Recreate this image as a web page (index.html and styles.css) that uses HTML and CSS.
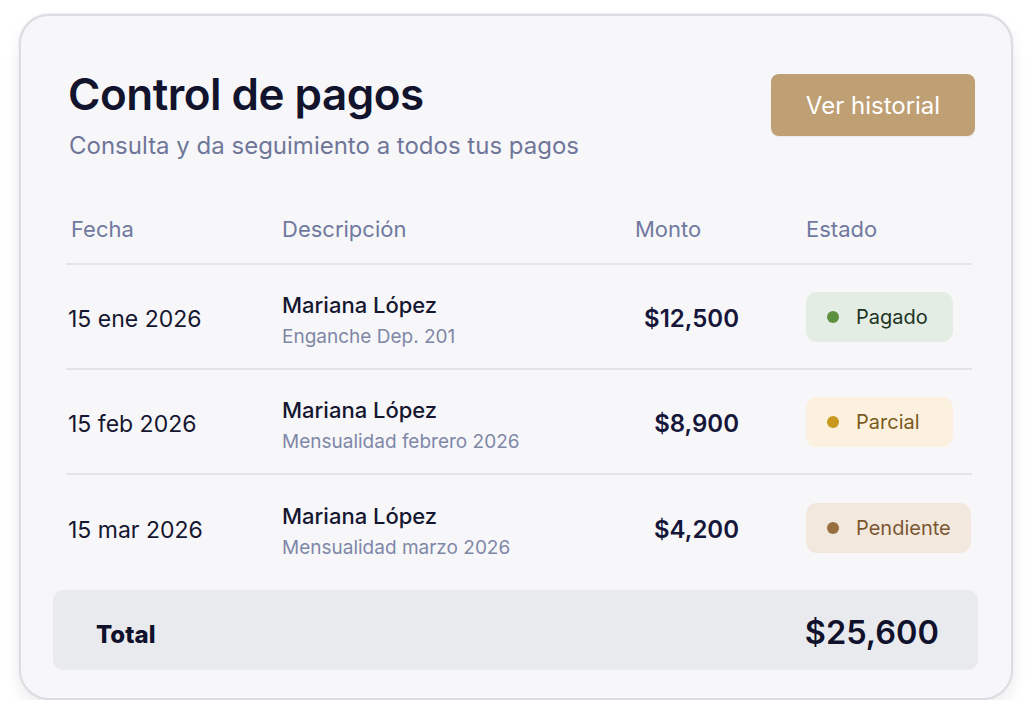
FILE: index.html
```html
<!DOCTYPE html>
<html lang="es">
<head>
<meta charset="utf-8">
<title>Control de pagos</title>
<link rel="stylesheet" href="styles.css">
</head>
<body>
<main class="card">
  <header class="card-head">
    <div class="titles">
      <h1 class="title">Control de pagos</h1>
      <p class="subtitle">Consulta y da seguimiento a todos tus pagos</p>
    </div>
    <button class="btn-history" type="button">Ver historial</button>
  </header>

  <div class="table">
    <div class="row head">
      <div class="cell">Fecha</div>
      <div class="cell">Descripción</div>
      <div class="cell">Monto</div>
      <div class="cell status-cell">Estado</div>
    </div>

    <div class="row">
      <div class="cell date">15 ene 2026</div>
      <div class="cell desc">
        <span class="name">Mariana López</span>
        <span class="concept">Enganche Dep. 201</span>
      </div>
      <div class="cell amount">$12,500</div>
      <div class="cell status-cell badge-cell"><span class="badge paid"><i class="dot"></i>Pagado</span></div>
    </div>

    <div class="row">
      <div class="cell date">15 feb 2026</div>
      <div class="cell desc">
        <span class="name">Mariana López</span>
        <span class="concept">Mensualidad febrero 2026</span>
      </div>
      <div class="cell amount">$8,900</div>
      <div class="cell status-cell badge-cell"><span class="badge partial"><i class="dot"></i>Parcial</span></div>
    </div>

    <div class="row last">
      <div class="cell date">15 mar 2026</div>
      <div class="cell desc">
        <span class="name">Mariana López</span>
        <span class="concept">Mensualidad marzo 2026</span>
      </div>
      <div class="cell amount">$4,200</div>
      <div class="cell status-cell badge-cell"><span class="badge pending"><i class="dot"></i>Pendiente</span></div>
    </div>
  </div>

  <div class="total">
    <span class="total-label">Total</span>
    <span class="total-value">$25,600</span>
  </div>
</main>
</body>
</html>
```

FILE: styles.css
```css
* { box-sizing: border-box; }

html, body {
  margin: 0;
  padding: 0;
  background: #ffffff;
}

body {
  font-family: Inter, "Noto Sans", "DejaVu Sans", sans-serif;
  color: #13142f;
  padding: 14px 0 0 19px;
}

.card {
  width: 994px;
  height: 686px;
  background: #f7f7f9;
  border: 2px solid #dcdde2;
  border-radius: 30px;
  box-shadow: 0 0 0 1px #eef0f3, 0 8px 16px rgba(20, 20, 40, 0.08);
  padding: 51px 36px 0 34px;
  display: flex;
  flex-direction: column;
}

.card-head {
  display: flex;
  justify-content: space-between;
  align-items: flex-start;
  padding: 0 0 0 13px;
}

.title {
  margin: 0;
  font-size: 44px;
  line-height: 54px;
  font-weight: 600;
  letter-spacing: -0.5px;
  color: #12132d;
}

.subtitle {
  margin: 10px 0 0 1px;
  font-size: 24px;
  line-height: 30px;
  font-weight: 400;
  color: #6f7699;
}

.btn-history {
  margin-top: 7px;
  width: 204px;
  height: 62px;
  border: none;
  border-radius: 8px;
  background: #bf9f74;
  color: #ffffff;
  font-family: inherit;
  font-size: 24px;
  font-weight: 400;
  box-shadow: 0 1px 2px rgba(0,0,0,0.06);
}

.table {
  margin: 34px 3px 0 11px;
}

.row {
  display: grid;
  grid-template-columns: 216px 353px 105px 1fr;
  align-items: center;
  height: 105px;
  padding-top: 4px;
  border-bottom: 2px solid #e3e4ea;
}

.row.head {
  height: 70px;
  padding-top: 0;
  font-size: 22px;
  color: #7079a0;
}

.row.last {
  border-bottom: none;
}

.cell { min-width: 0; }

.row.head .cell:first-child { padding-left: 5px; }

.status-cell { padding-left: 66px; }

.badge-cell { margin-top: -4px; }

.date {
  padding-left: 2px;
  font-size: 23px;
  font-weight: 400;
  color: #151630;
}

.desc {
  display: flex;
  flex-direction: column;
  gap: 7px;
  margin-top: 3px;
}

.name {
  font-size: 22px;
  font-weight: 500;
  color: #151630;
}

.concept {
  font-size: 19px;
  color: #7f87a8;
}

.amount {
  text-align: right;
  padding-right: 1px;
  font-size: 24px;
  font-weight: 600;
  color: #15163a;
}

.badge {
  display: inline-flex;
  align-items: center;
  min-width: 147px;
  height: 50px;
  padding: 0 20px 0 21px;
  border-radius: 11px;
  font-size: 20px;
}

.dot {
  display: inline-block;
  width: 12px;
  height: 12px;
  border-radius: 50%;
  margin-right: 17px;
}

.paid { background: #e4ede3; color: #203322; }
.paid .dot { background: #5b913f; }

.partial { background: #fcf1df; color: #7a5a20; }
.partial .dot { background: #c9991e; }

.pending { background: #f2e8dd; color: #7b5631; }
.pending .dot { background: #98703f; }

.total {
  margin: 10px -3px 0 -2px;
  height: 80px;
  display: flex;
  justify-content: space-between;
  align-items: center;
  background: #e9eaee;
  border-radius: 10px;
  padding: 8px 39px 0 43px;
}

.total-label {
  font-size: 24px;
  font-weight: 800;
  color: #10112b;
}

.total-value {
  font-size: 32.5px;
  font-weight: 600;
  color: #10112b;
  margin-top: -3px;
}
```
